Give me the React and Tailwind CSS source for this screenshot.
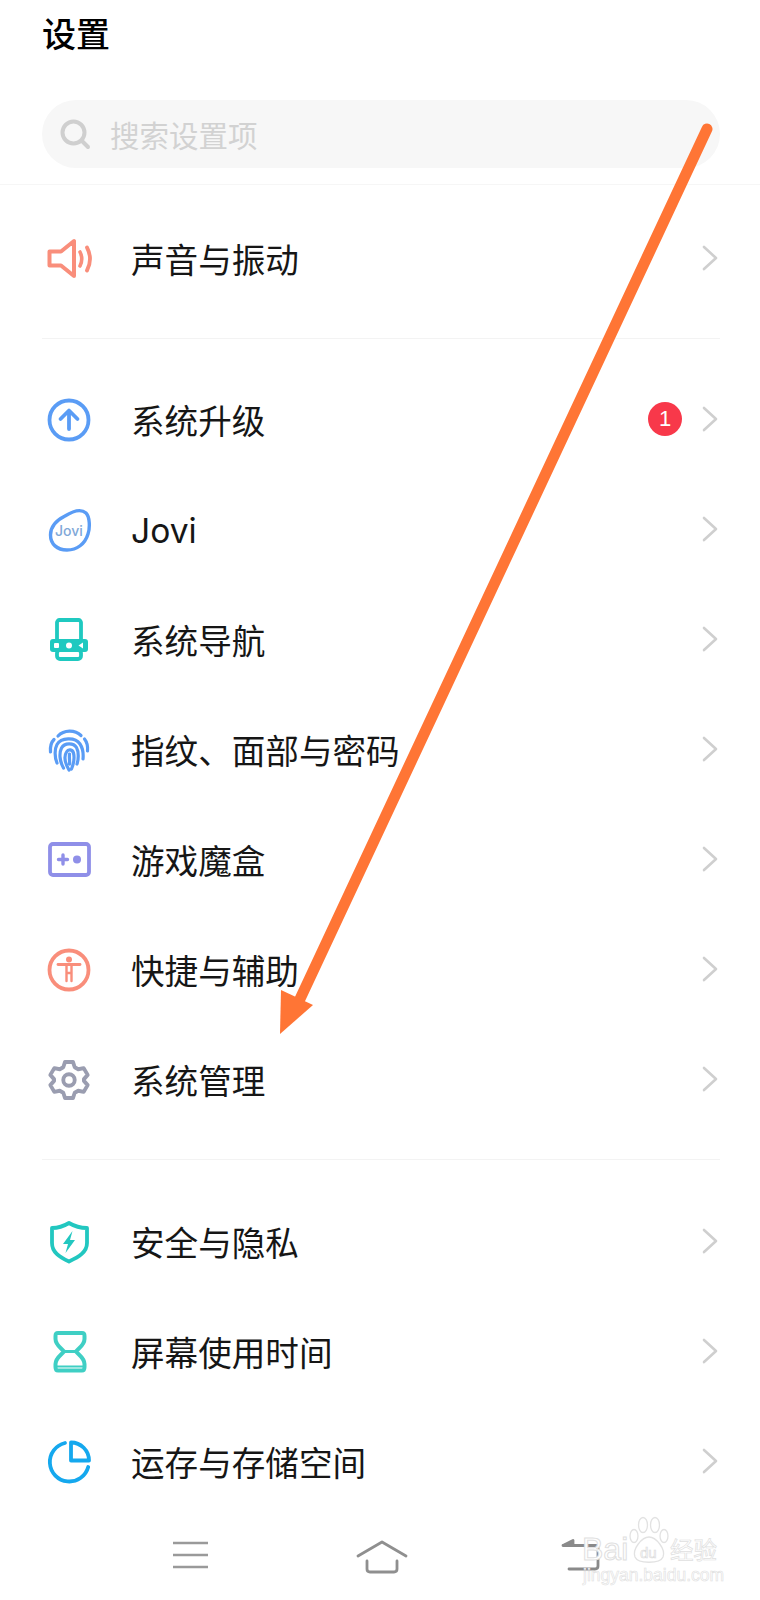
import React from "react";

const Chevron = () => (
  <svg width="16" height="26" viewBox="0 0 16 26" className="shrink-0 mb-[3px]" fill="none" stroke="#cfcfcf" strokeWidth="2.6" strokeLinecap="round" strokeLinejoin="round">
    <path d="M2 2 L14 13 L2 24" />
  </svg>
);

const Ic = ({ children }) => (
  <svg width="48" height="48" viewBox="0 0 48 48" fill="none" strokeLinecap="round" strokeLinejoin="round">
    {children}
  </svg>
);

const Speaker = () => (
  <Ic>
    <g stroke="#f98e7b">
      <path d="M4.500 16.500 H16 L29 6 V41 L16 30.500 H4.500 Z" strokeWidth="4" />
      <path d="M35 17 Q38.500 24 35 31" strokeWidth="3.600" />
      <path d="M42 12.500 Q48 24 42 35.500" strokeWidth="3.800" />
    </g>
  </Ic>
);
const Upgrade = () => (
  <Ic>
    <circle cx="24" cy="24" r="19.500" stroke="#5a9cf5" strokeWidth="3.800" />
    <path d="M24 33 V15 M15.500 23 L24 14.500 L32.500 23" stroke="#5a9cf5" strokeWidth="3.800" />
  </Ic>
);
const JoviIcon = () => (
  <div className="relative w-[48px] h-[48px]">
    <svg width="48" height="48" viewBox="0 0 48 48" fill="none">
      <path d="M5.500 29 C5.500 20 12 14 20 10 C28 5 36 2.500 41 7 C45 11 45 22 43 28 C40 38 32 44 22 44 C12 44 5.500 38 5.500 29 Z" stroke="#5a9cf5" strokeWidth="3.400" />
    </svg>
    <span className="absolute left-[10px] top-[17px] text-[14px] leading-[16px] font-medium font-['Inter',sans-serif] text-[#7fa8d8]">Jovi</span>
  </div>
);
const NavIcon = () => (
  <Ic>
    <rect x="12" y="4" width="24" height="26" rx="2.500" stroke="#1fc9c0" strokeWidth="3.800" />
    <rect x="5" y="23" width="38" height="13" rx="3" fill="#1fc9c0" />
    <rect x="12" y="34" width="24" height="9" rx="3" stroke="#1fc9c0" strokeWidth="3.800" fill="#fff" />
    <rect x="9" y="27" width="5" height="5" rx="1" fill="#fff" />
    <circle cx="24" cy="29.500" r="3" fill="#fff" />
    <path d="M38 26.500 V32.500 L33.500 29.500 Z" fill="#fff" />
  </Ic>
);
const Finger = () => (
  <Ic>
    <g stroke="#5a9cf5" strokeWidth="3.200">
      <path d="M13 10 C19 3.500 30 3.500 36 9.500" />
      <path d="M5.500 26 C5 20 6.500 16 9 13.500" />
      <path d="M42.500 25 C43 20 41.500 15.500 39.500 13" />
      <path d="M12 37 C9.500 31 9.500 23 12 18.500 C16 11.500 30 10.500 35 18 C38 22.500 38.500 28 38 33" />
      <path d="M18.500 42 C14.500 35 14 27 16.500 22 C19.500 16.500 28.500 16.500 31.500 21.500 C34 26 33.500 34 32 38" />
      <path d="M24 44 C20 37 19 30 21.500 26 C23.500 22.500 27.500 23.500 28.500 27 C29.500 31 28.500 38 26.500 43" />
      <path d="M24.500 28 C24 32 25 36 24.500 38" />
    </g>
  </Ic>
);
const Game = () => (
  <Ic>
    <rect x="5" y="8" width="39" height="31" rx="3" stroke="#8f8fe8" strokeWidth="3.800" />
    <path d="M13.500 23.500 H22.500 M18 19 V28" stroke="#8f8fe8" strokeWidth="3.400" />
    <circle cx="32" cy="23.500" r="4" fill="#8f8fe8" />
  </Ic>
);
const Access = () => (
  <Ic>
    <circle cx="24" cy="24" r="19.500" stroke="#f98e7b" strokeWidth="3.800" />
    <circle cx="24" cy="13.500" r="3" fill="#f98e7b" />
    <path d="M13 18.500 H35" stroke="#f98e7b" strokeWidth="2.800" />
    <path d="M21.500 19 V35 M26.500 19 V35 M21.500 27 H26.500" stroke="#f98e7b" strokeWidth="2.400" />
  </Ic>
);
const Gear = () => (
  <Ic>
    <g transform="translate(24 24) scale(0.88) translate(-24 -24)">
      <path d="M19.500 3.500 H28.500 L30.500 9.500 L34.500 11.800 L40.700 10.500 L45.200 18.200 L41 23 V25 L45.200 29.800 L40.700 37.500 L34.500 36.200 L30.500 38.500 L28.500 44.500 H19.500 L17.500 38.500 L13.500 36.200 L7.300 37.500 L2.800 29.800 L7 25 V23 L2.800 18.200 L7.300 10.500 L13.500 11.800 L17.500 9.500 Z" stroke="#9a9db0" strokeWidth="4.400" />
      <circle cx="24" cy="24" r="6.500" stroke="#9a9db0" strokeWidth="4.400" />
    </g>
  </Ic>
);
const Shield = () => (
  <Ic>
    <path d="M24 5 C29 8 36 10 42 10 V25 C42 34 34 39 24 43.500 C14 39 7 34 7 25 V10 C12 10 19 8 24 5 Z" stroke="#22c7c0" strokeWidth="3.800" />
    <path d="M27.500 13 L18 26 H23 L20.500 35 L30 22 H25 Z" fill="#22c7c0" />
  </Ic>
);
const Hourglass = () => (
  <Ic>
    <path d="M13 5 H37 C39 5 39.500 6 39.500 8 V11 C39.500 17 34 20 31 23.500 C34 27 39.500 30 39.500 36 V39 C39.500 41 39 42.500 37 42.500 H13 C11 42.500 10.500 41 10.500 39 V36 C10.500 30 16 27 19 23.500 C16 20 10.500 17 10.500 11 V8 C10.500 6 11 5 13 5 Z" stroke="#3fcfc4" strokeWidth="4" />
    <path d="M19 23.500 H31" stroke="#3fcfc4" strokeWidth="3" />
    <path d="M12 38.500 H38" stroke="#3fcfc4" strokeWidth="2" />
  </Ic>
);
const Pie = () => (
  <Ic>
    <path d="M20 5 A19.500 19.500 0 1 0 43.200 29" stroke="#15a8ee" strokeWidth="3.800" />
    <path d="M26 4.500 C36 4.500 44 12.500 44 22.500 H26 Z" stroke="#15a8ee" strokeWidth="3.800" />
  </Ic>
);

const Row = ({ icon, label, badge, latin }) => (
  <div className="h-[110px] flex items-center pl-[45px] pr-[42px]">
    <div className="w-[48px] h-[48px] shrink-0">{icon}</div>
    <span className={`ml-[38px] flex-1 text-[33.600px] text-[#161616] whitespace-nowrap ${latin ? "font-['Inter',sans-serif] relative top-[1px]" : ""}`}>{label}</span>
    {badge && (
      <span className="mr-[20px] mb-[3px] w-[34px] h-[34px] rounded-full bg-[#f8384a] text-white text-[22px] leading-[34px] text-center font-['Liberation_Sans',sans-serif]">{badge}</span>
    )}
    <Chevron />
  </div>
);

export default function App() {
  return (
    <div className="relative w-[760px] h-[1600px] overflow-hidden bg-white font-['Noto_Sans_CJK_SC','Noto_Sans',sans-serif]">
      <div className="h-[100px] pl-[42px] pt-[10px]">
        <h1 className="text-[34px] leading-[46px] font-medium text-black">设置</h1>
      </div>
      <div className="ml-[42px] mr-[40px] h-[68px] rounded-[34px] bg-[#f7f7f7] flex items-center pl-[16px]">
        <svg width="34" height="34" viewBox="0 0 34 34" fill="none" stroke="#cfcfcf" strokeWidth="4" strokeLinecap="round">
          <circle cx="15.500" cy="15.500" r="11" />
          <path d="M24 24 L30 30" />
        </svg>
        <span className="ml-[18px] text-[29.500px] text-[#d2d2d2]">搜索设置项</span>
      </div>
      <div className="mt-[16px] h-[1px] bg-[#f6f6f6]" />

      <div className="pt-[19px] pb-[24px]">
        <Row icon={<Speaker />} label="声音与振动" />
      </div>
      <div className="ml-[42px] mr-[40px] h-[1px] bg-[#f3f3f3]" />

      <div className="pt-[26px] pb-[24px]">
        <Row icon={<Upgrade />} label="系统升级" badge="1" />
        <Row icon={<JoviIcon />} label="Jovi" latin />
        <Row icon={<NavIcon />} label="系统导航" />
        <Row icon={<Finger />} label="指纹、面部与密码" />
        <Row icon={<Game />} label="游戏魔盒" />
        <Row icon={<Access />} label="快捷与辅助" />
        <Row icon={<Gear />} label="系统管理" />
      </div>
      <div className="ml-[42px] mr-[40px] h-[1px] bg-[#f3f3f3]" />

      <div className="pt-[27px]">
        <Row icon={<Shield />} label="安全与隐私" />
        <Row icon={<Hourglass />} label="屏幕使用时间" />
        <Row icon={<Pie />} label="运存与存储空间" />
      </div>

      <div className="flex items-center justify-between h-[76px] pl-[172px] pr-[160px]">
        <svg width="38" height="30" viewBox="0 0 38 30" fill="none" stroke="#9a9a9a" strokeWidth="2.600">
          <path d="M1 3 H36 M1 15 H36 M1 27 H36" />
        </svg>
        <svg width="52" height="34" viewBox="0 0 52 34" className="mt-[3px] -ml-[4px]" fill="none" stroke="#8f8f8f" strokeWidth="2.800" strokeLinecap="round" strokeLinejoin="round">
          <path d="M2 16 L26 2 L50 16" />
          <path d="M11 21 V29 C11 31 12 32 14 32 H38 C40 32 41 31 41 29 V21" />
        </svg>
        <svg width="40" height="32" viewBox="0 0 40 32" fill="none" stroke="#8a8a8a" strokeWidth="2.800" strokeLinecap="round" strokeLinejoin="round" className="ml-[3px] -mr-[1px]">
          <path d="M2 6.500 H35 C36 6.500 37 7.500 37 8.500 V27 C37 29 36 30 34 30 H8" />
          <path d="M3 6 L12 1.500 V6 Z" fill="#8a8a8a" />
        </svg>
      </div>

      <svg width="760" height="1600" viewBox="0 0 760 1600" fill="none" className="absolute left-0 top-0 pointer-events-none">
        <path d="M707 129 L300 999" stroke="#ff7535" strokeWidth="11" strokeLinecap="round" />
        <path d="M281 990 L313 1005 L280 1034 Z" fill="#ff7535" />
      </svg>

      <div className="absolute left-[582px] top-[1516px] w-[140px] h-[70px] pointer-events-none">
        <svg width="44" height="50" viewBox="0 0 44 50" className="absolute left-[46px] top-[0px]" fill="#ffffff" stroke="#e2e2e2" strokeWidth="1.300">
          <ellipse cx="6" cy="20" rx="4" ry="6.500" />
          <ellipse cx="15" cy="9" rx="4.500" ry="7.500" />
          <ellipse cx="27" cy="9" rx="4.500" ry="7.500" />
          <ellipse cx="36" cy="20" rx="4" ry="6.500" />
          <path d="M21 21 C28 21 38 33 35 41 C32 48 10 48 7 41 C4 33 14 21 21 21 Z" />
        </svg>
        <span className="absolute left-[0px] top-[17px] text-[32px] leading-[32px] font-['Liberation_Sans',sans-serif] text-white [-webkit-text-stroke:1px_#e0e0e0]">Bai</span>
        <span className="absolute left-[58px] top-[29px] text-[15px] leading-[16px] font-['Liberation_Sans',sans-serif] text-white [-webkit-text-stroke:0.7px_#dcdcdc]">du</span>
        <span className="absolute left-[88px] top-[18px] text-[23.500px] leading-[30px] text-white [-webkit-text-stroke:0.7px_#e0e0e0]">经验</span>
        <span className="absolute left-[1px] top-[49px] text-[17.500px] leading-[20px] font-['Liberation_Sans',sans-serif] text-white [-webkit-text-stroke:0.6px_#e0e0e0] whitespace-nowrap">jingyan.baidu.com</span>
      </div>
    </div>
  );
}
